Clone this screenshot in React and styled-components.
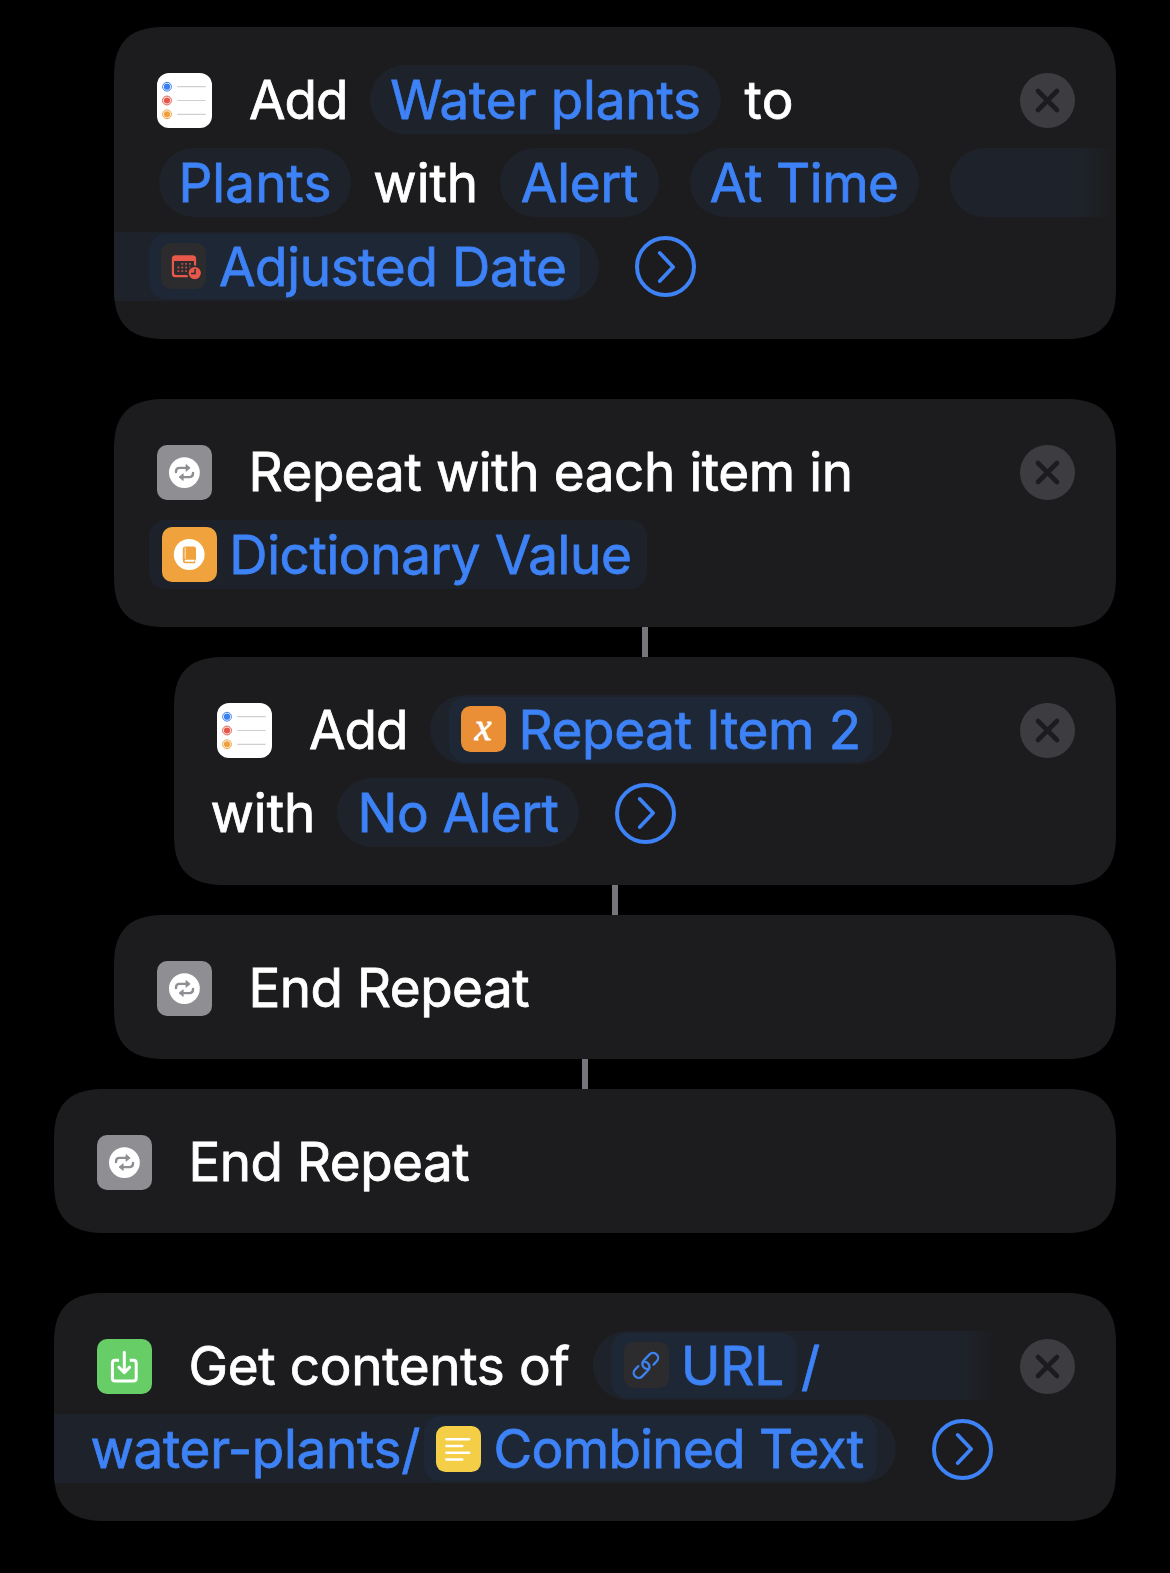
import React from 'react';
import styled, { createGlobalStyle, css } from 'styled-components';

const color = {
  card: '#1c1c1e',
  pill: '#1e222a',
  chip: '#1e2735',
  blue: '#3d82f6',
  white: '#ffffff',
};

const GlobalStyle = createGlobalStyle`
  body {
    margin: 0;
    background: #000;
    font-family: Inter, Roboto, sans-serif;
  }
`;

const Screen = styled.main`
  box-sizing: border-box;
  width: 1170px;
  height: 1573px;
  padding: 27px 54px 0;
  background: #000;
  display: flex;
  flex-direction: column;
  align-items: flex-end;
  overflow: hidden;
`;

const Group = styled.section`
  width: 100%;
  display: flex;
  flex-direction: column;
  align-items: flex-end;
  margin-bottom: 60px;
`;

const Card = styled.article`
  box-sizing: border-box;
  width: ${({ $level }) => 1062 - $level * 60}px;
  height: ${({ $lines }) => [0, 144, 228, 312][$lines]}px;
  padding: 37.5px 0;
  display: flex;
  flex-direction: column;
  gap: 14.7px;
  background: ${color.card};
  border-radius: 43px;
  overflow: hidden;
  @supports (corner-shape: superellipse(1.4)) {
    border-radius: 52px;
    corner-shape: superellipse(1.4);
  }
`;

const Connector = styled.div`
  width: ${({ $level }) => 1062 - $level * 60}px;
  height: 30px;
  display: flex;
  justify-content: center;
  &::before {
    content: '';
    width: 6px;
    background: #75767b;
  }
`;

const Line = styled.div`
  box-sizing: border-box;
  flex: none;
  height: 69px;
  display: flex;
  align-items: center;
  padding-left: ${({ $start = 0 }) => $start}px;
`;

const Words = styled.span`
  flex: none;
  width: ${({ $w }) => ($w ? `${$w}px` : 'auto')};
  margin-left: ${({ $gap = 0 }) => $gap}px;
  padding-top: 2px;
  font-size: 53px;
  line-height: 67px;
  white-space: nowrap;
  letter-spacing: ${({ $track = 0 }) => $track}px;
  color: ${({ $link }) => ($link ? color.blue : color.white)};
  -webkit-text-stroke: 0.8px currentColor;
`;

const Pill = styled.span`
  box-sizing: border-box;
  flex: none;
  height: 69px;
  width: ${({ $w }) => $w}px;
  margin-left: ${({ $gap = 0 }) => $gap}px;
  padding-left: ${({ $inset = 0 }) => $inset}px;
  display: flex;
  align-items: center;
  justify-content: ${({ $inset }) => ($inset === undefined ? 'center' : 'flex-start')};
  border-radius: 34.5px;
  background: ${color.pill};
  ${({ $open }) =>
    $open === 'right' &&
    css`
      border-radius: 34.5px 0 0 34.5px;
      background: linear-gradient(to right, ${color.pill} calc(100% - 36px), ${color.card} calc(100% - 4px));
    `}
  ${({ $open }) =>
    $open === 'left' &&
    css`
      border-radius: 0 34.5px 34.5px 0;
    `}
`;

const Chip = styled.span`
  box-sizing: border-box;
  flex: none;
  width: ${({ $w }) => $w}px;
  height: ${({ $plain }) => ($plain ? 69 : 65)}px;
  padding-left: ${({ $inset = 11.5 }) => $inset}px;
  display: flex;
  align-items: center;
  border-radius: 16px;
  background: ${({ $plain }) => ($plain ? '#1d2129' : color.chip)};
`;

const IconTile = styled.span`
  flex: none;
  width: ${({ $small }) => ($small ? 45.4 : 55)}px;
  height: ${({ $small }) => ($small ? 46 : 55)}px;
  border-radius: ${({ $small, $round }) => ($round ? 12 : $small ? 9.5 : 10)}px;
  background: ${({ $bg }) => $bg};
  margin-top: ${({ $lead }) => ($lead ? 3 : 0)}px;
  svg {
    display: block;
    width: 100%;
    height: 100%;
  }
`;

const VariableMark = styled.span`
  display: block;
  font: italic 400 38px/42px 'Liberation Serif', serif;
  -webkit-text-stroke: 0.8px #fff;
  color: #fff;
  text-align: center;
`;

const CloseButton = styled.button`
  flex: none;
  width: 55px;
  height: 55px;
  margin: 3px 41px 0 auto;
  padding: 0;
  border: 0;
  border-radius: 50%;
  background: #3d3c40;
  svg {
    display: block;
  }
`;

const MoreButton = styled.button`
  box-sizing: border-box;
  flex: none;
  width: 61px;
  height: 61px;
  margin: 1px 0 0 36px;
  padding: 0;
  border: 4.4px solid ${color.blue};
  border-radius: 50%;
  background: none;
  display: flex;
  align-items: center;
  justify-content: center;
`;

const Close = () => (
  <CloseButton aria-label="Remove">
    <svg width="55" height="55" viewBox="0 0 55 55">
      <path d="M18 18 37 37M37 18 18 37" stroke={color.card} strokeWidth="4.6" strokeLinecap="round" />
    </svg>
  </CloseButton>
);

const More = () => (
  <MoreButton aria-label="Show more">
    <svg width="20" height="36" viewBox="0 0 20 36" fill="none">
      <path d="M4.8 4 18.1 18 4.8 32" stroke={color.blue} strokeWidth="3.8" strokeLinecap="round" strokeLinejoin="round" />
    </svg>
  </MoreButton>
);

const RemindersIcon = () => (
  <IconTile $bg="#fff" $round $lead>
    <svg viewBox="0 0 55 55" fill="none">
      {[
        ['#3a7fee', 13.7],
        ['#e4574a', 27.5],
        ['#efa03c', 41.3],
      ].map(([c, y]) => (
        <g key={c}>
          <circle cx="10" cy={y} r="4.4" stroke={c} strokeWidth="1" />
          <circle cx="10" cy={y} r="3.1" fill={c} />
          <path d={`M20.3 ${y}H48.7`} stroke="#cfcfcf" strokeWidth="1.2" />
        </g>
      ))}
    </svg>
  </IconTile>
);

const RepeatIcon = () => (
  <IconTile $bg="#8f8e93" $lead>
    <svg viewBox="0 0 55 55" fill="none">
      <circle cx="27.4" cy="27.6" r="15.4" fill="#fff" />
      <g stroke="#8f8e93" strokeWidth="2.4" strokeLinecap="round">
        <path d="M19 27V26.4Q19 22.9 22.6 22.9H29" />
        <path d="M36 28V28.6Q36 32.1 32.4 32.1H26" />
      </g>
      <path d="M29 19.5 33.2 22.9 29 26.3ZM26.2 28.7 22 32.1 26.2 35.5Z" fill="#8f8e93" stroke="#8f8e93" strokeWidth="0.8" strokeLinejoin="round" />
    </svg>
  </IconTile>
);

const DictionaryIcon = () => (
  <IconTile $bg="#f0a33c">
    <svg viewBox="0 0 55 55" fill="none">
      <circle cx="27.2" cy="27.5" r="15.4" fill="#fff" />
      <path d="M23.4 19.4H31.8Q34 19.4 34 21.6V31.6Q34 32.8 33.2 33.2V36.2H23.8Q20.8 36.2 20.8 33V22Q20.8 19.4 23.4 19.4Z" fill="#f0a33c" />
      <path d="M23.2 20.9V31.4" stroke="#fff" strokeWidth="0.8" strokeLinecap="round" />
      <path d="M23.6 33.7H31.6" stroke="#fff" strokeWidth="2" strokeLinecap="round" />
    </svg>
  </IconTile>
);

const CalendarIcon = () => (
  <IconTile $small $bg="#2c2b2d">
    <svg viewBox="0 0 46 46" fill="none">
      <path d="M14.6 12H32Q35.6 12 35.6 15.6V23H33.4V18H13.2V30.2Q13.2 32.2 15.2 32.2H27.2V34.5H14.6Q11 34.5 11 30.9V15.6Q11 12 14.6 12Z" fill="#e8584a" />
      <g stroke="#b84c43" strokeWidth="1.9" strokeDasharray="1.9 2">
        <path d="M20.6 20.8H31" />
        <path d="M16.7 24.5H31" />
        <path d="M16.7 28.2H27.5" />
      </g>
      <circle cx="34.2" cy="30.2" r="7.6" fill="#2c2b2d" />
      <circle cx="34.2" cy="30.2" r="6.2" fill="#e8584a" />
      <path d="M34.5 26.6V30.7H31" stroke="#2c2b2d" strokeWidth="1.5" strokeLinecap="round" />
    </svg>
  </IconTile>
);

const VariableIcon = () => (
  <IconTile $small $bg="#eb8f37">
    <VariableMark>x</VariableMark>
  </IconTile>
);

const DownloadIcon = () => (
  <IconTile $bg="#67ce67" $lead>
    <svg viewBox="0 0 55 55" fill="none" stroke="#fff" strokeWidth="3" strokeLinecap="round" strokeLinejoin="round">
      <path d="M22 21.3H18.3Q15.4 21.3 15.4 24.2V39.2Q15.4 42.1 18.3 42.1H36.3Q39.2 42.1 39.2 39.2V24.2Q39.2 21.3 36.3 21.3H32.7" strokeLinecap="butt" />
      <path d="M27.3 13.3V33M21.9 28.2 27.3 33.6 32.7 28.2" />
    </svg>
  </IconTile>
);

const LinkIcon = () => (
  <IconTile $small $bg="#2c2b2d">
    <svg viewBox="0 0 46 46" fill="none" stroke="#3d82ee" strokeWidth="2.4" strokeLinecap="round">
      <g transform="translate(22.2 23.4) rotate(-46)">
        <path d="M6 5H10.6A5 5 0 0 0 10.6 -5H2A5 5 0 0 0 -1.6 3.4" />
        <path d="M-6 -5H-10.6A5 5 0 0 0 -10.6 5H-2A5 5 0 0 0 1.6 -3.4" />
      </g>
    </svg>
  </IconTile>
);

const TextIcon = () => (
  <IconTile $small $bg="#f4ce46">
    <svg viewBox="0 0 46 46" stroke="#fff" strokeWidth="2.6" strokeLinecap="round">
      <path d="M10.6 13.2H33.6M10.6 20H26.6M10.6 26.8H33.6M10.6 33.6H26.6" />
    </svg>
  </IconTile>
);

const EndRepeat = ({ level }) => (
  <Card $level={level} $lines={1}>
    <Line $start={43}>
      <RepeatIcon />
      <Words $gap={36.4} $track={-0.5}>End Repeat</Words>
    </Line>
  </Card>
);

export default function App() {
  return (
    <Screen>
      <GlobalStyle />

      <Group>
        <Card $level={1} $lines={3}>
          <Line $start={43}>
            <RemindersIcon />
            <Words $gap={37} $w={121} $track={-1}>Add</Words>
            <Pill $w={351}>
              <Words $link $track={-0.2}>Water plants</Words>
            </Pill>
            <Words $gap={23.6} $track={0.3}>to</Words>
            <Close />
          </Line>
          <Line $start={45}>
            <Pill $w={192}>
              <Words $link $track={0.1}>Plants</Words>
            </Pill>
            <Words $gap={22.3} $w={102.7}>with</Words>
            <Pill $gap={24} $w={159}>
              <Words $link $track={-0.2}>Alert</Words>
            </Pill>
            <Pill $gap={30.7} $w={229}>
              <Words $link $track={-0.5}>At Time</Words>
            </Pill>
            <Pill $gap={31.1} $w={167} $inset={0} $open="right" />
          </Line>
          <Line>
            <Pill $w={484.5} $inset={35} $open="left">
              <Chip $w={430.5}>
                <CalendarIcon />
                <Words $link $gap={13} $track={-0.34}>Adjusted Date</Words>
              </Chip>
            </Pill>
            <More />
          </Line>
        </Card>
      </Group>

      <Group>
        <Card $level={1} $lines={2}>
          <Line $start={43}>
            <RepeatIcon />
            <Words $gap={36.6} $track={-0.4}>Repeat with each item in</Words>
            <Close />
          </Line>
          <Line $start={35}>
            <Chip $plain $w={498} $inset={13}>
              <DictionaryIcon />
              <Words $link $gap={12.3} $track={-0.4}>Dictionary Value</Words>
            </Chip>
          </Line>
        </Card>
        <Connector $level={2} />
        <Card $level={2} $lines={2}>
          <Line $start={43}>
            <RemindersIcon />
            <Words $gap={37} $w={121} $track={-1}>Add</Words>
            <Pill $w={461.5} $inset={19}>
              <Chip $w={424}>
                <VariableIcon />
                <Words $link $gap={12.6} $track={-0.33}>Repeat Item 2</Words>
              </Chip>
            </Pill>
            <Close />
          </Line>
          <Line $start={36.5}>
            <Words $w={102}>with</Words>
            <Pill $gap={24.3} $w={242.2}>
              <Words $link $track={-0.55}>No Alert</Words>
            </Pill>
            <More />
          </Line>
        </Card>
        <Connector $level={1} />
        <EndRepeat level={1} />
        <Connector $level={0} />
        <EndRepeat level={0} />
      </Group>

      <Group>
        <Card $level={0} $lines={2}>
          <Line $start={43}>
            <DownloadIcon />
            <Words $gap={36.5} $w={404.5} $track={-0.34}>Get contents of</Words>
            <Pill $w={407} $inset={18} $open="right">
              <Chip $w={186} $inset={12.6}>
                <LinkIcon />
                <Words $link $gap={12} $track={-0.1}>URL</Words>
              </Chip>
              <Words $link $gap={4}>/</Words>
            </Pill>
            <Close />
          </Line>
          <Line>
            <Pill $w={842} $inset={36.5} $open="left">
              <Words $link $w={333.4} $track={-0.3}>water-plants/</Words>
              <Chip $w={453.5} $inset={12}>
                <TextIcon />
                <Words $link $gap={12.3} $track={-0.7}>Combined Text</Words>
              </Chip>
            </Pill>
            <More />
          </Line>
        </Card>
      </Group>
    </Screen>
  );
}
